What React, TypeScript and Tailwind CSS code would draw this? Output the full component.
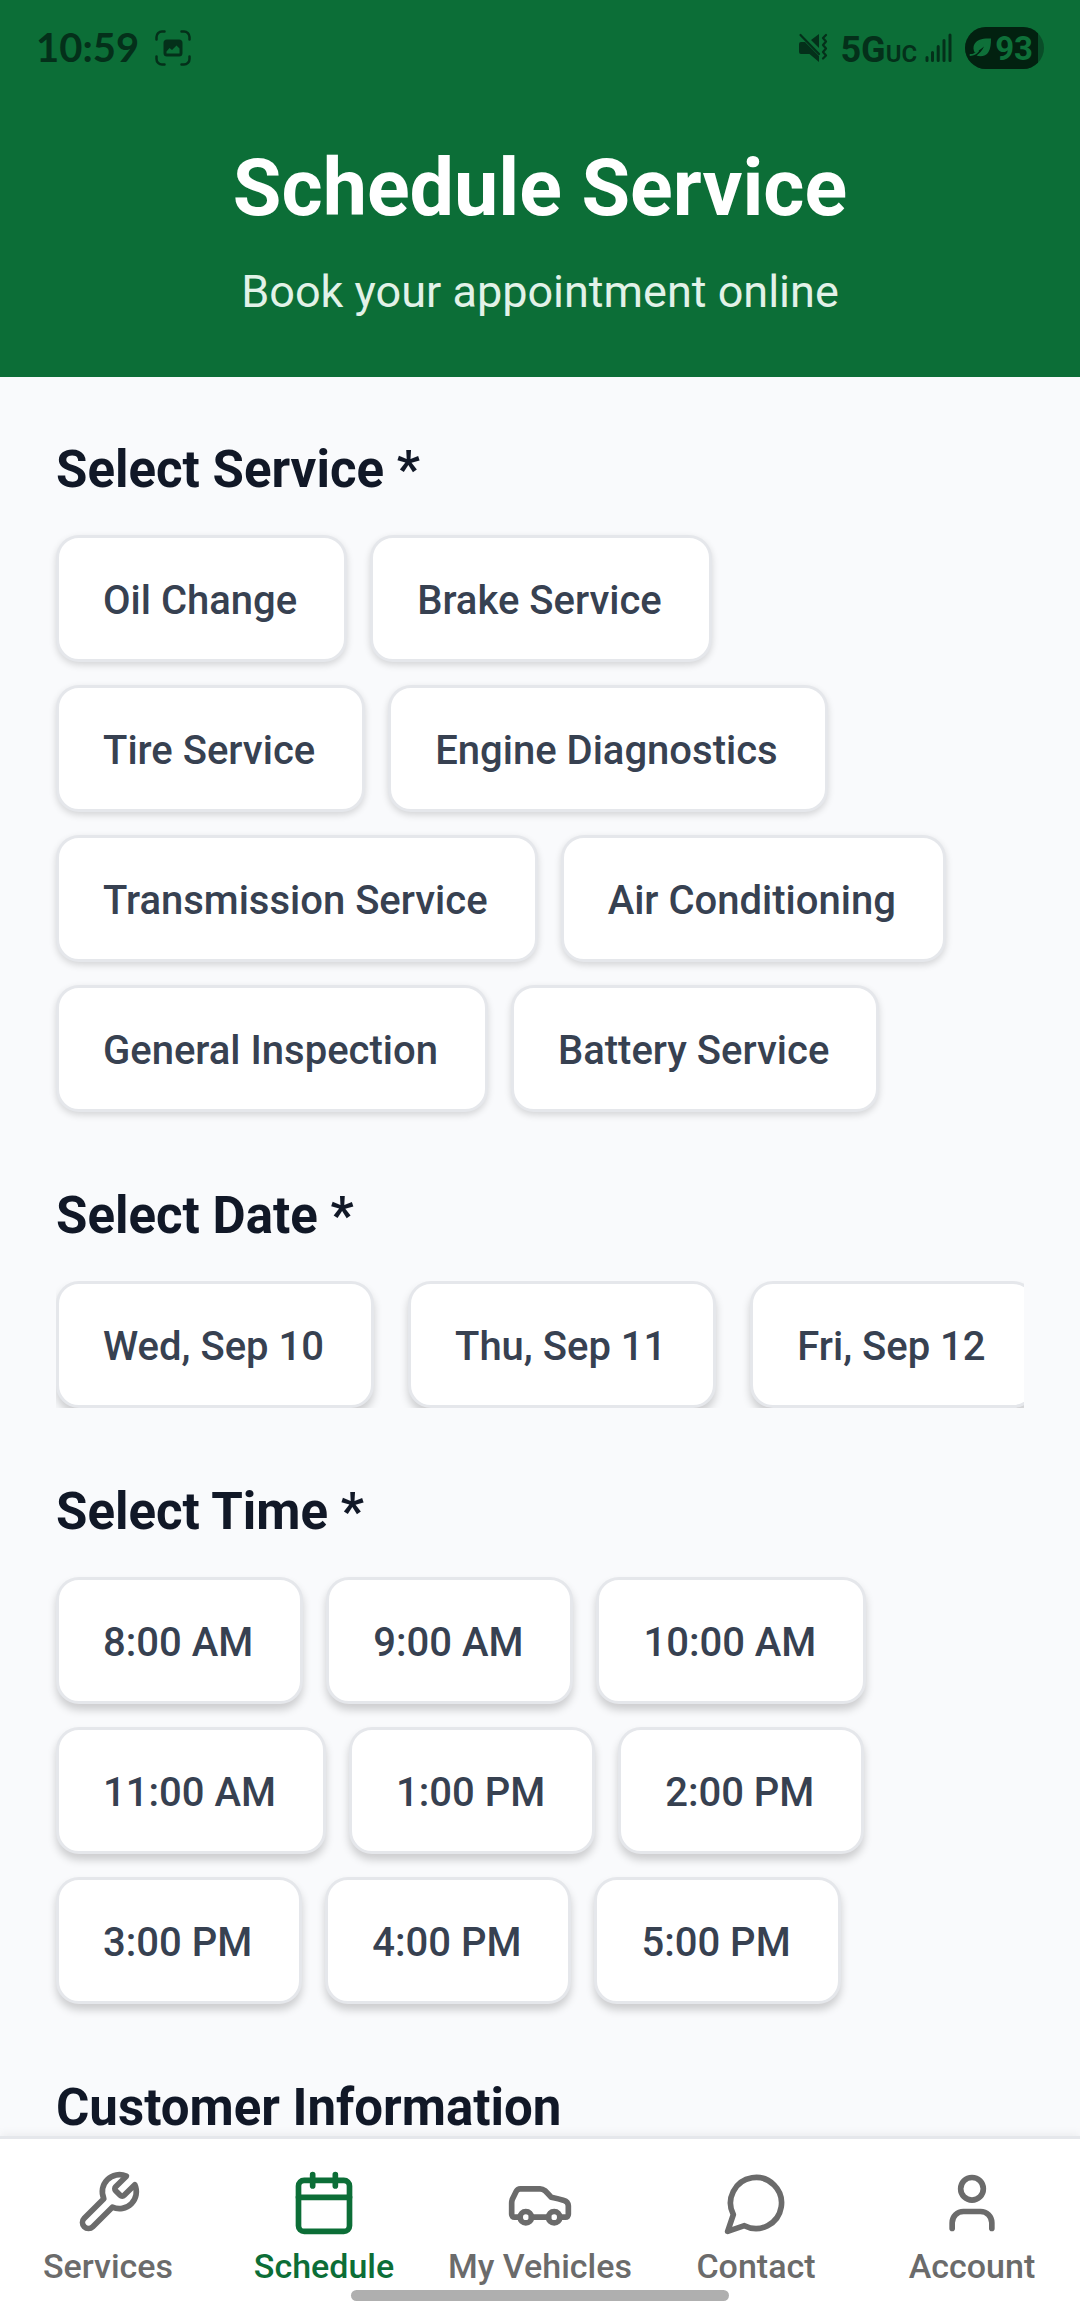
import { useState, type ReactNode } from "react";

const services = [
  "Oil Change",
  "Brake Service",
  "Tire Service",
  "Engine Diagnostics",
  "Transmission Service",
  "Air Conditioning",
  "General Inspection",
  "Battery Service",
];

const dates = ["Wed, Sep 10", "Thu, Sep 11", "Fri, Sep 12"];

const times = [
  "8:00 AM",
  "9:00 AM",
  "10:00 AM",
  "11:00 AM",
  "1:00 PM",
  "2:00 PM",
  "3:00 PM",
  "4:00 PM",
  "5:00 PM",
];

function StatusBar() {
  return (
    <div className="flex h-24 items-center justify-between px-9 text-[#04301a]">
      <div className="flex items-center gap-4">
        <span className="pb-0.5 font-[Lato,sans-serif] text-[40px] leading-none font-bold">10:59</span>
        <svg width="36" height="36" viewBox="0 0 36 36" fill="none" aria-hidden="true">
          <path
            d="M1.5 9.5V7A5.5 5.5 0 0 1 7 1.5H9.5M26.5 1.5H29A5.5 5.5 0 0 1 34.5 7V9.5M34.5 26.5V29A5.5 5.5 0 0 1 29 34.5H26.5M9.5 34.5H7A5.5 5.5 0 0 1 1.5 29V26.5"
            stroke="currentColor"
            strokeWidth="2.5"
            strokeLinecap="round"
          />
          <path
            fillRule="evenodd"
            fill="currentColor"
            d="M12 9.5h12a3.5 3.5 0 0 1 3.5 3.5v10a3.5 3.5 0 0 1-3.5 3.5H12a3.5 3.5 0 0 1-3.5-3.5v-10A3.5 3.5 0 0 1 12 9.5zM11.500 21.500v2h13v-5l-3-3-4.500 4.500-2.500-2z"
          />
        </svg>
      </div>
      <div className="flex items-center">
        <svg width="30" height="30" viewBox="0 0 30 30" fill="none" aria-hidden="true">
          <path fill="currentColor" d="M1 11a2 2 0 0 1 2-2h4L21 23v6L11.500 21H3a2 2 0 0 1-2-2zM13 7l8-6v14z" />
          <path d="M2.500 2L21 21" stroke="currentColor" strokeWidth="2.200" strokeLinecap="round" />
          <path
            d="M28 2l-3 3 3 3.500-3 3.500 3 3.500-3 3.500 3 3.500-3 3"
            stroke="currentColor"
            strokeWidth="2.200"
            strokeLinecap="round"
            strokeLinejoin="round"
          />
        </svg>
        <div className="ml-3 flex items-baseline pt-1 font-[Roboto,sans-serif] leading-none font-bold">
          <span className="text-[36px]">5G</span>
          <span className="text-[24px] font-semibold">UC</span>
        </div>
        <svg className="ml-2" width="28" height="30" viewBox="0 0 28 30" aria-hidden="true">
          <g stroke="currentColor" strokeWidth="3" strokeLinecap="round">
            <path d="M2 24.500V27.500M7.500 19.500V27.500M13.200 13.500V27.500M19 7.500V27.500M25 2V27.500" />
          </g>
        </svg>
        <div className="ml-3 flex h-[42px] items-center overflow-hidden rounded-full bg-[#094d28]">
          <div className="flex h-full items-center gap-0.5 bg-[#022110] pr-[5px] pl-1 text-[#0e7039]">
            <svg width="24" height="24" viewBox="0 0 24 24" fill="none" aria-hidden="true">
              <path
                fill="currentColor"
                d="M22 2.500C14 2 8 3.500 5.500 8c-1.500 2.700-1.300 6 .2 8.500 2.500-.8 6.300-3 9.300-6-1.600 3.700-4.600 7-7.500 9 4 1.500 9.500.8 12-3.500 2-3.500 2.500-8 2.500-13.500z"
              />
              <path d="M9 15c-2 2.500-4 4-7.500 4" stroke="currentColor" strokeWidth="2" strokeLinecap="round" />
            </svg>
            <span className="font-[Roboto,sans-serif] text-[33px] leading-none font-bold">93</span>
          </div>
          <div className="w-[6px]" />
        </div>
      </div>
    </div>
  );
}

type ChipProps = { label: string; selected: boolean; onSelect: () => void; deep?: boolean };

function Chip({ label, selected, onSelect, deep }: ChipProps) {
  return (
    <button
      type="button"
      aria-pressed={selected}
      onClick={onSelect}
      className={`shrink-0 rounded-[23px] border-[3px] border-[#e5e7eb] bg-white pt-9 pr-[47px] pb-8 pl-11 text-[40px] leading-[53px] font-medium whitespace-nowrap text-[#374151] aria-pressed:border-[#0c6e37] ${
        deep ? "shadow-[0_6px_8px_rgba(0,0,0,0.18)]" : "shadow-[0_3px_7px_rgba(0,0,0,0.15)]"
      }`}
    >
      {label}
    </button>
  );
}

function Section({ title, children }: { title: string; children?: ReactNode }) {
  return (
    <section className="mb-[74px]">
      <h2 className="mb-[35px] text-[51px] leading-[60px] font-bold text-[#111827]">{title}</h2>
      {children}
    </section>
  );
}

function Icon({ children }: { children: ReactNode }) {
  return (
    <svg
      width="68"
      height="68"
      viewBox="0 0 24 24"
      fill="none"
      stroke="currentColor"
      strokeWidth="2"
      strokeLinecap="round"
      strokeLinejoin="round"
      aria-hidden="true"
    >
      {children}
    </svg>
  );
}

const tabs = [
  {
    label: "Services",
    icon: (
      <path d="M14.7 6.3a1 1 0 0 0 0 1.4l1.6 1.6a1 1 0 0 0 1.4 0l3.77-3.77a6 6 0 0 1-7.94 7.94l-6.91 6.91a2.12 2.12 0 0 1-3-3l6.91-6.91a6 6 0 0 1 7.94-7.94l-3.76 3.76z" />
    ),
  },
  {
    label: "Schedule",
    icon: (
      <>
        <path d="M8 2v4M16 2v4M3 10h18" />
        <rect width="18" height="18" x="3" y="4" rx="2" />
      </>
    ),
  },
  {
    label: "My Vehicles",
    icon: (
      <>
        <path d="M19 17h2c.6 0 1-.4 1-1v-3c0-.9-.7-1.700-1.500-1.900C18.700 10.600 16 10 16 10s-1.300-1.400-2.200-2.300c-.5-.4-1.100-.7-1.800-.7H5c-.6 0-1.100.4-1.400.9l-1.400 2.900A3.700 3.700 0 0 0 2 12v4c0 .6.4 1 1 1h2M9 17h6" />
        <circle cx="7" cy="17" r="2" />
        <circle cx="17" cy="17" r="2" />
      </>
    ),
  },
  { label: "Contact", icon: <path d="M7.9 20A9 9 0 1 0 4 16.100L2 22Z" /> },
  {
    label: "Account",
    icon: (
      <>
        <path d="M19 21v-2a4 4 0 0 0-4-4H9a4 4 0 0 0-4 4v2" />
        <circle cx="12" cy="7" r="4" />
      </>
    ),
  },
];

export default function App() {
  const [service, setService] = useState("");
  const [date, setDate] = useState("");
  const [time, setTime] = useState("");

  return (
    <div className="flex h-screen flex-col bg-[#f9fafc] font-[Roboto,sans-serif]">
      <header className="shrink-0 bg-[#0c6e37] text-center">
        <StatusBar />
        <div className="pt-[46px] pb-[58px]">
          <h1 className="text-[79px] leading-[92px] font-bold text-white">Schedule Service</h1>
          <p className="mt-[31px] text-[45px] leading-[54px] text-[#e2f2e8]">Book your appointment online</p>
        </div>
      </header>

      <main className="min-h-0 flex-1 overflow-x-hidden overflow-y-auto px-14 pt-[63px] [scrollbar-width:none]">
        <Section title="Select Service *">
          <div className="flex flex-wrap gap-[23px]">
            {services.map((s) => (
              <Chip key={s} label={s} selected={service === s} onSelect={() => setService(s)} />
            ))}
          </div>
        </Section>
        <Section title="Select Date *">
          <div className="flex gap-[34px] overflow-x-auto overflow-y-hidden [scrollbar-width:none]">
            {dates.map((d) => (
              <Chip key={d} label={d} selected={date === d} onSelect={() => setDate(d)} deep />
            ))}
          </div>
        </Section>
        <Section title="Select Time *">
          <div className="flex flex-wrap gap-[23px]">
            {times.map((t) => (
              <Chip key={t} label={t} selected={time === t} onSelect={() => setTime(t)} deep />
            ))}
          </div>
        </Section>
        <Section title="Customer Information" />
      </main>

      <nav className="relative shrink-0 border-t-[3px] border-[#e5e7eb] bg-white pt-[30px] pb-[30px] shadow-[0_-3px_8px_rgba(0,0,0,0.05)]">
        <div className="grid grid-cols-5">
          {tabs.map((t) => (
            <a
              key={t.label}
              href="#"
              aria-current={t.label === "Schedule" ? "page" : undefined}
              className="flex flex-col items-center gap-[9px] text-[34px] leading-[40px] font-medium text-[#6b6b6b] aria-[current=page]:text-[#0c6e37]"
            >
              <Icon>{t.icon}</Icon>
              {t.label}
            </a>
          ))}
        </div>
        <div className="absolute bottom-[15px] left-1/2 h-[11px] w-[378px] -translate-x-1/2 rounded-full bg-[#afafaf]" />
      </nav>
    </div>
  );
}
